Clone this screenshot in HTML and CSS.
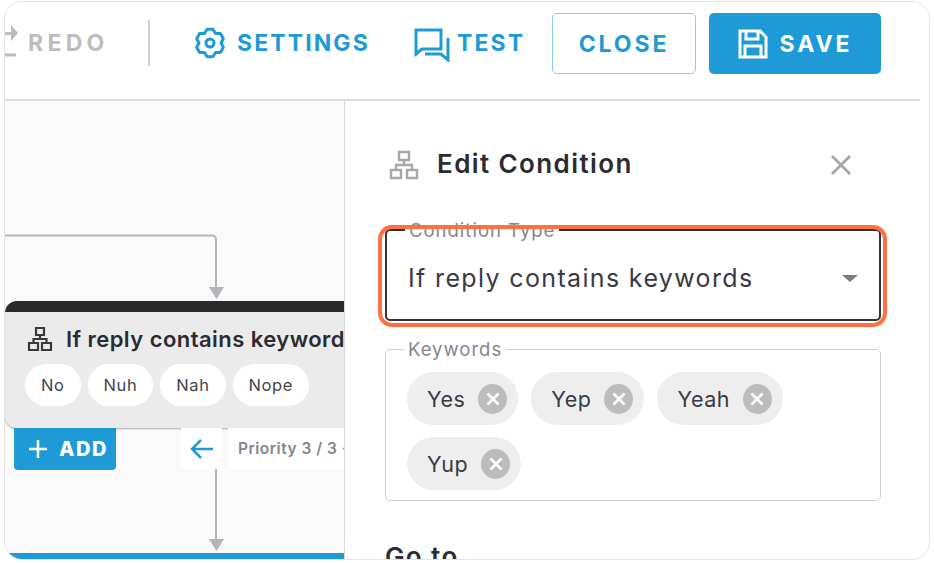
FILE: index.html
```html
<!DOCTYPE html>
<html lang="en">
<head>
<meta charset="utf-8">
<title>Edit Condition</title>
<link rel="stylesheet" href="styles.css">
</head>
<body>
<div class="frame">
  <header class="toolbar">
    <svg class="redo-icon" width="13" height="48" viewBox="0 0 13 48"><path d="M0 11H6V4L13 12L6 20V14H0Z" fill="#bdbdbd"/><path d="M0 34H11" stroke="#bdbdbd" stroke-width="3"/></svg>
    <span class="tool redo">REDO</span>
    <span class="divider"></span>
    <svg class="gear" width="32" height="32" viewBox="0 0 32 32"><polygon points="13.1,2.3 18.9,2.3 21.5,6.5 26.4,6.6 29.3,11.7 27,16 29.3,20.3 26.4,25.4 21.5,25.5 18.9,29.7 13.1,29.7 10.5,25.5 5.6,25.4 2.7,20.3 5,16 2.7,11.7 5.6,6.6 10.5,6.5" fill="none" stroke="#1e9ad6" stroke-width="3" stroke-linejoin="round"/><circle cx="16" cy="16" r="4" fill="none" stroke="#1e9ad6" stroke-width="3"/></svg>
    <span class="tool settings">SETTINGS</span>
    <svg class="chat" width="36" height="34" viewBox="0 0 36 34"><path d="M2 2H27V21H8L2 26Z" fill="none" stroke="#1e9ad6" stroke-width="3"/><path d="M34 10V32L27 26H11" fill="none" stroke="#1e9ad6" stroke-width="3"/></svg>
    <span class="tool test">TEST</span>
    <button class="btn btn-close">CLOSE</button>
    <button class="btn btn-save">
      <svg width="30" height="30" viewBox="0 0 30 30"><path d="M2 2H22L28 8V28H2Z" fill="none" stroke="#fff" stroke-width="3"/><path d="M8 2V10H20V2M7 28V17H23V28" fill="none" stroke="#fff" stroke-width="3"/></svg>
      <span>SAVE</span>
    </button>
  </header>
  <div class="workspace">
    <section class="canvas">
      <svg class="wires" width="339" height="458" viewBox="0 0 339 458">
        <path d="M0 134.500H207a4 4 0 0 1 4 4V188" fill="none" stroke="#b4b4bb" stroke-width="2"/>
        <path d="M204 186H219L211.500 198Z" fill="#b4b4bb"/>
        <path d="M211 367V440" stroke="#b4b4bb" stroke-width="2"/>
        <path d="M204 438H219L211.500 450Z" fill="#b4b4bb"/>
      </svg>
      <div class="node">
        <div class="node-bar"></div>
        <div class="node-title">
          <svg width="26" height="26" viewBox="0 0 26 26"><path d="M9 2H17V9H9ZM2 17H11V24H2ZM15 17H24V24H15ZM13 9V13M6.500 17V13H19.500V17" fill="none" stroke="#3a3a3a" stroke-width="2.200"/></svg>
          <span>If reply contains keywords</span>
        </div>
        <div class="node-chips">
          <span class="node-chip">No</span>
          <span class="node-chip">Nuh</span>
          <span class="node-chip">Nah</span>
          <span class="node-chip">Nope</span>
        </div>
      </div>
      <button class="add"><svg width="20" height="20" viewBox="0 0 20 20"><path d="M10 1V19M1 10H19" stroke="#fff" stroke-width="2.500"/></svg><span>ADD</span></button>
      <div class="prev"><svg width="24" height="24" viewBox="0 0 24 24"><path d="M23 12H2M11 3L2 12L11 21" fill="none" stroke="#1e9ad6" stroke-width="2.500"/></svg></div>
      <div class="priority">Priority 3 / 3 ·</div>
      <div class="next-node"></div>
    </section>
    <aside class="panel">
      <div class="panel-head">
        <svg class="head-icon" width="30" height="30" viewBox="0 0 30 30"><path d="M10 2H20V10H10ZM2 20H12V28H2ZM18 20H28V28H18ZM15 10V15M7 20V15H23V20" fill="none" stroke="#a8a8a8" stroke-width="2.400"/></svg>
        <h2>Edit Condition</h2>
        <svg class="x" width="22" height="22" viewBox="0 0 22 22"><path d="M2 2L20 20M20 2L2 20" stroke="#a6a6a6" stroke-width="2.800"/></svg>
      </div>
      <fieldset class="field field-type">
        <legend>Condition Type</legend>
        <span class="value">If reply contains keywords</span>
        <span class="caret"></span>
        <span class="highlight"></span>
      </fieldset>
      <fieldset class="field field-keys">
        <legend>Keywords</legend>
        <div class="chips">
          <span class="chip">Yes<i class="chip-x"><svg width="16" height="16" viewBox="0 0 16 16"><path d="M2.500 2.500L13.500 13.500M13.500 2.500L2.500 13.500" stroke="#fff" stroke-width="2.600"/></svg></i></span>
          <span class="chip">Yep<i class="chip-x"><svg width="16" height="16" viewBox="0 0 16 16"><path d="M2.500 2.500L13.500 13.500M13.500 2.500L2.500 13.500" stroke="#fff" stroke-width="2.600"/></svg></i></span>
          <span class="chip">Yeah<i class="chip-x"><svg width="16" height="16" viewBox="0 0 16 16"><path d="M2.500 2.500L13.500 13.500M13.500 2.500L2.500 13.500" stroke="#fff" stroke-width="2.600"/></svg></i></span>
          <span class="chip">Yup<i class="chip-x"><svg width="16" height="16" viewBox="0 0 16 16"><path d="M2.500 2.500L13.500 13.500M13.500 2.500L2.500 13.500" stroke="#fff" stroke-width="2.600"/></svg></i></span>
        </div>
      </fieldset>
      <h3>Go to</h3>
    </aside>
  </div>
</div>
</body>
</html>
```
FILE: styles.css
```css
* { box-sizing: border-box; }
html, body { height: 100%; }
body {
  margin: 0;
  background: #fff;
  font-family: Inter, "Liberation Sans", sans-serif;
  color: #2b2b33;
  overflow: hidden;
}
.frame {
  width: 926px;
  height: 559px;
  margin: 1px 0 0 4px;
  border: 1px solid #e4e4e6;
  border-radius: 18px;
  overflow: hidden;
  display: flex;
  flex-direction: column;
}
.toolbar {
  height: 99px;
  flex: none;
  display: flex;
  align-items: flex-start;
  padding-top: 11px;
  margin-right: 9px;
  border-bottom: 2px solid #dcdcdc;
}
.redo-icon { margin-top: 8px; margin-right: 10px; }
.tool {
  font-size: 23px;
  font-weight: 700;
  line-height: 60px;
  color: #1e9ad6;
  letter-spacing: 2.1px;
  white-space: nowrap;
}
.redo { color: #bdbdbd; width: 78px; letter-spacing: 4.3px; }
.divider { width: 2px; height: 46px; margin: 7px 44px 0 42px; background: #cfcfcf; }
.gear { margin: 14px 11px 0 0; }
.settings { width: 134px; }
.chat { margin: 15px 7px 0 43px; }
.test { width: 69px; }
.btn {
  height: 61px;
  font-family: inherit;
  font-size: 23px;
  font-weight: 700;
  letter-spacing: 2.9px;
  border-radius: 5px;
  display: flex;
  align-items: center;
  justify-content: center;
  padding: 0;
}
.btn-close { width: 144px; margin-left: 26px; background: #fff; border: 1px solid #8ccbec; color: #1e9ad6; }
.btn-save { width: 172px; margin-left: 13px; background: #1e9ad6; border: 0; color: #fff; gap: 12px; }
.workspace { flex: 1; display: flex; min-height: 0; }
.canvas {
  position: relative;
  width: 339px;
  flex: none;
  background: #fafafa;
  overflow: hidden;
}
.wires { position: absolute; left: 0; top: 0; }
.node {
  position: absolute;
  left: 0;
  top: 200px;
  width: 339px;
  height: 127px;
  background: #ebebeb;
  border-radius: 12px 0 0 12px;
  box-shadow: 0 1px 2px #aaa;
  overflow: hidden;
}
.node-bar { height: 11px; background: #2a2a2c; }
.node-title {
  display: flex;
  align-items: center;
  gap: 13px;
  padding: 1px 0 0 22px;
  height: 52px;
  font-size: 22px;
  font-weight: 600;
  letter-spacing: 0.45px;
  white-space: nowrap;
}
.node-title svg { flex: none; }
.node-chips { display: flex; gap: 7px; padding-left: 20px; }
.node-chip {
  height: 42px;
  padding: 0 16px;
  min-width: 55px;
  border-radius: 21px;
  background: #fff;
  font-size: 16.500px;
  letter-spacing: 0.6px;
  line-height: 42px;
  text-align: center;
  color: #44444c;
}
.add {
  position: absolute;
  left: 9px;
  top: 327px;
  width: 102px;
  height: 42px;
  border: 0;
  border-radius: 0 0 4px 4px;
  background: #1e9ad6;
  color: #fff;
  font-family: inherit;
  font-size: 20px;
  font-weight: 800;
  letter-spacing: 1.6px;
  display: flex;
  align-items: center;
  gap: 11px;
  padding: 0 0 0 14px;
}
.prev {
  position: absolute;
  left: 176px;
  top: 327px;
  width: 41px;
  height: 41px;
  background: #fff;
  display: flex;
  align-items: center;
  justify-content: center;
}
.priority {
  position: absolute;
  left: 223px;
  top: 327px;
  width: 116px;
  height: 41px;
  background: #fff;
  padding-left: 10px;
  font-size: 15.500px;
  font-weight: 600;
  letter-spacing: 0.5px;
  line-height: 41px;
  color: #85858c;
  white-space: nowrap;
  overflow: hidden;
}
.next-node {
  position: absolute;
  left: 0;
  top: 452px;
  width: 339px;
  height: 8px;
  background: #1e9ad6;
}
.panel {
  flex: 1;
  border-left: 1px solid #d8d8d8;
  padding: 0 0 0 40px;
  overflow: hidden;
  min-width: 0;
}
.panel-head {
  height: 120px;
  display: flex;
  align-items: flex-start;
  padding: 48px 0 0 4px;
}
.head-icon { margin: 1px 18px 0 0; }
.panel-head h2 {
  margin: 0;
  width: 393px;
  font-size: 26px;
  line-height: 30px;
  font-weight: 600;
  letter-spacing: 1.4px;
  white-space: nowrap;
}
.x { margin-top: 5px; }
.field {
  position: relative;
  margin: 0;
  padding: 0;
  width: 496px;
  border-radius: 5px;
  min-inline-size: 0;
}
.field legend {
  margin-left: 18px;
  padding: 0 4px;
  font-size: 18.500px;
  letter-spacing: 1px;
  line-height: 18px;
  color: #85858c;
}
.field-type {
  height: 100px;
  border: 2px solid #333;
}
.value {
  display: block;
  margin: 24px 0 0 21px;
  font-size: 25px;
  letter-spacing: 1.350px;
  line-height: 30px;
  color: #3a3a44;
}
.caret {
  position: absolute;
  right: 21px;
  top: 36px;
  width: 0;
  height: 0;
  border: 8px solid transparent;
  border-top: 7px solid #7b7b7b;
  border-bottom: 0;
}
.highlight {
  position: absolute;
  left: -9px;
  top: -14px;
  right: -8px;
  bottom: -8px;
  border: 4px solid #ff7043;
  border-radius: 14px;
}
.field-keys {
  margin-top: 19px;
  height: 161px;
  border: 1.500px solid #cfcfcf;
}
.chips {
  display: flex;
  flex-wrap: wrap;
  gap: 12px 13px;
  padding: 14px 20px 0 21px;
}
.chip {
  height: 53px;
  padding: 0 11px 0 20px;
  border-radius: 27px;
  background: #eeeeee;
  display: flex;
  align-items: center;
  gap: 13px;
  font-size: 21.500px;
  letter-spacing: 0.5px;
  color: #3a3a44;
}
.chip-x {
  width: 29px;
  height: 30px;
  border-radius: 50%;
  background: #bcbcbc;
  display: flex;
  align-items: center;
  justify-content: center;
}
h3 {
  margin: 41px 0 0;
  font-size: 26px;
  line-height: 30px;
  font-weight: 600;
  letter-spacing: 1.4px;
}
```
